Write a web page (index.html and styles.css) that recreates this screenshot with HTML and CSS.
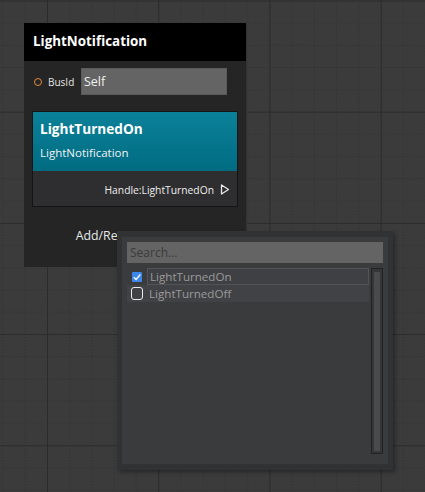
FILE: index.html
```html
<!DOCTYPE html>
<html>
<head>
<meta charset="utf-8">
<link rel="stylesheet" href="styles.css">
</head>
<body>
<svg class="grid" width="425" height="492" xmlns="http://www.w3.org/2000/svg">
  <defs>
    <pattern id="g" x="47" y="0.5" width="111.2" height="111.2" patternUnits="userSpaceOnUse">
      <g stroke="#2d2d2d" stroke-width="1" stroke-dasharray="1 2">
        <line x1="22.7" y1="0" x2="22.7" y2="111.2"/>
        <line x1="44.9" y1="0" x2="44.9" y2="111.2"/>
        <line x1="67.1" y1="0" x2="67.1" y2="111.2"/>
        <line x1="89.3" y1="0" x2="89.3" y2="111.2"/>
        <line x1="0" y1="22.7" x2="111.2" y2="22.7"/>
        <line x1="0" y1="44.9" x2="111.2" y2="44.9"/>
        <line x1="0" y1="67.1" x2="111.2" y2="67.1"/>
        <line x1="0" y1="89.3" x2="111.2" y2="89.3"/>
      </g>
      <g stroke="#2b2b2b" stroke-width="1.2">
        <line x1="0.5" y1="0" x2="0.5" y2="111.2"/>
        <line x1="0" y1="0.5" x2="111.2" y2="0.5"/>
      </g>
    </pattern>
  </defs>
  <rect width="425" height="492" fill="url(#g)"/>
</svg>

<div class="node">
  <div class="node-header">LightNotification</div>
  <div class="node-body">
    <div class="bus-row">
      <span class="slot"></span>
      <span class="bus-label">BusId</span>
      <div class="bus-input">Self</div>
    </div>
    <div class="event-card">
      <div class="event-top">
        <div class="event-title">LightTurnedOn</div>
        <div class="event-sub">LightNotification</div>
      </div>
      <div class="event-bottom">
        <span class="handle-text">Handle:LightTurnedOn</span>
        <svg class="exec" width="10" height="11" viewBox="0 0 10 11"><path d="M1.5 1 L8.5 5.5 L1.5 10 Z" fill="none" stroke="#e8e8e8" stroke-width="1.3" stroke-linejoin="round"/></svg>
      </div>
    </div>
    <div class="add-remove">Add/Remove Events</div>
  </div>
</div>

<div class="popup">
  <div class="popup-inner">
    <div class="search">Search...</div>
    <div class="list-area">
      <div class="list">
        <div class="row row-first">
          <span class="check checked"><svg width="10" height="10" viewBox="0 0 10 10"><path d="M1.8 5.2 L4.1 7.5 L8.4 2.3" fill="none" stroke="#ffffff" stroke-width="1.3"/></svg></span>
          <span class="row-label sel">LightTurnedOn</span>
        </div>
        <div class="row row-second">
          <span class="check empty"></span>
          <span class="row-label">LightTurnedOff</span>
        </div>
      </div>
      <div class="scrollbar"><div class="thumb"></div></div>
    </div>
  </div>
</div>
</body>
</html>
```

FILE: styles.css
```css
html, body {
  margin: 0;
  padding: 0;
}
body {
  width: 425px;
  height: 492px;
  background: #3b3b3b;
  position: relative;
  overflow: hidden;
  font-family: "Open Sans", "DejaVu Sans", sans-serif;
  padding-top: 23px;
  box-sizing: border-box;
}
.grid {
  position: absolute;
  left: 0;
  top: 0;
}
.node {
  position: relative;
  margin-left: 24px;
  width: 222px;
  height: 244px;
  background: #252525;
  border-right: 1px solid #343434;
  display: flex;
  flex-direction: column;
}
.node-header {
  height: 38px;
  background: #000;
  color: #fff;
  font-weight: 700;
  font-size: 13.4px;
  line-height: 37px;
  padding-left: 9px;
}
.node-body {
  display: flex;
  flex-direction: column;
  padding: 7px 8px 0 8px;
}
.bus-row {
  display: flex;
  align-items: center;
  height: 27px;
}
.slot {
  width: 6px;
  height: 6px;
  border: 1.3px solid #e08a3c;
  border-radius: 50%;
  margin-left: 2px;
}
.bus-label {
  color: #e6e6e6;
  font-size: 10px;
  margin-left: 6px;
  width: 33px;
}
.bus-input {
  width: 146px;
  height: 27px;
  box-sizing: border-box;
  background: #646464;
  border: 1px solid #5a5a5a;
  color: #f0f0f0;
  font-size: 12.5px;
  line-height: 25px;
  padding-left: 2px;
}
.event-card {
  margin-top: 16px;
  border: 1px solid #141414;
  display: flex;
  flex-direction: column;
}
.event-top {
  height: 59px;
  background: linear-gradient(180deg, #0b8199 0%, #006c82 100%);
  padding-left: 7px;
  color: #fff;
}
.event-title {
  font-weight: 700;
  font-size: 13.6px;
  margin-top: 8px;
  line-height: 18px;
}
.event-sub {
  font-size: 11.5px;
  margin-top: 7px;
  line-height: 15px;
  color: #f2f2f2;
}
.event-bottom {
  height: 35px;
  background: #2e2e30;
  display: flex;
  align-items: center;
  justify-content: flex-end;
  padding-right: 7px;
  gap: 6px;
}
.handle-text {
  color: #ededed;
  font-size: 10.3px;
  padding-top: 2px;
}
.exec {
  margin-top: 1px;
}
.add-remove {
  color: #e8e8e8;
  font-size: 12.3px;
  text-align: center;
  margin-top: 20px;
  padding-right: 4px;
}
.popup {
  position: absolute;
  left: 117px;
  top: 231px;
  width: 276px;
  height: 239px;
  box-sizing: border-box;
  background: #313233;
  padding: 6px 5px 6px 5px;
  box-shadow: 2px 2px 4px rgba(0,0,0,0.35);
}
.popup-inner {
  height: 100%;
  background: #3a3b3d;
  box-sizing: border-box;
  padding: 5px 5px 5px 5px;
  display: flex;
  flex-direction: column;
}
.search {
  height: 21px;
  background: #646464;
  color: #3b3b3b;
  font-size: 12px;
  line-height: 21px;
  padding-left: 3px;
}
.list-area {
  margin-top: 5px;
  flex: 1;
  display: flex;
  gap: 2px;
}
.list {
  flex: 1;
  display: flex;
  flex-direction: column;
}
.row {
  height: 17px;
  display: flex;
  align-items: center;
  background: #414245;
}
.row-first {
  background: transparent;
}
.check {
  box-sizing: border-box;
  display: flex;
  align-items: center;
  justify-content: center;
}
.check.checked {
  background: #3d87eb;
  width: 10px;
  height: 10px;
  border-radius: 1px;
  margin-left: 5px;
  margin-right: 5px;
}
.check.empty {
  width: 12px;
  height: 13px;
  border: 1.5px solid #ececec;
  border-radius: 3px;
  margin-left: 4px;
  margin-right: 4px;
}
.row-label {
  color: #9a9a9a;
  font-size: 11.6px;
  height: 17px;
  line-height: 17px;
  padding-left: 2px;
  box-sizing: border-box;
  flex: 1;
}
.row-label.sel {
  background: #3f4043;
  border: 1px solid #525356;
  line-height: 15px;
}
.scrollbar {
  width: 12px;
  box-sizing: border-box;
  border: 1px solid #222222;
  background: #353638;
  padding: 3px 2px 2px 2px;
  margin-bottom: 5px;
}
.thumb {
  height: 100%;
  background: #4b4b4d;
  border-radius: 1px;
}
```
